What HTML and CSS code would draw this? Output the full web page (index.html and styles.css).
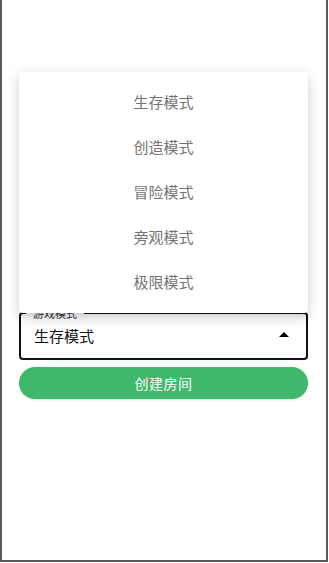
FILE: index.html
```html
<!DOCTYPE html>
<html lang="zh">
<head>
<meta charset="utf-8">
<link rel="stylesheet" href="styles.css">
</head>
<body>
<div class="frame">
  <form class="form">
    <div class="field">
      <span class="label">游戏模式</span>
      <span class="value">生存模式</span>
      <svg class="arrow" viewBox="0 0 24 24" width="24" height="24"><path d="M7 14l5-5 5 5z" fill="#000"/></svg>
    </div>
    <button type="button" class="btn">创建房间</button>
  </form>
  <ul class="menu">
    <li>生存模式</li>
    <li>创造模式</li>
    <li>冒险模式</li>
    <li>旁观模式</li>
    <li>极限模式</li>
  </ul>
</div>
</body>
</html>
```
FILE: styles.css
```css
* { box-sizing: border-box; }
html, body { margin: 0; padding: 0; background: #fff; }
body { font-family: "Noto Sans CJK SC", "Noto Sans", sans-serif; width: 329px; height: 563px; overflow: hidden; }
.frame {
  position: relative;
  width: 328px;
  height: 562px;
  border-left: 2px solid #5a5a5a;
  border-right: 2px solid #5a5a5a;
  border-bottom: 2px solid #5a5a5a;
  padding: 312px 18px 0 17px;
}
.form { display: flex; flex-direction: column; gap: 7px; }
.field {
  position: relative;
  height: 48px;
  border: 2px solid #111;
  border-radius: 4px;
  display: flex;
  align-items: center;
  padding: 0 13px;
}
.label {
  position: absolute;
  left: 5px;
  top: -9px;
  padding: 0 7px;
  background: #fff;
  font-size: 11px;
  line-height: 16px;
  color: #333;
}
.value { flex: 1; font-size: 15px; color: #111; margin-top: -2px; }
.arrow { margin-right: -3px; margin-top: -2px; }
.btn {
  height: 32px;
  border: none;
  border-radius: 16px;
  background: #3eb96a;
  color: #fff;
  font-family: inherit;
  font-size: 14px;
  letter-spacing: 0.5px;
  box-shadow: 0 1px 2px rgba(0,0,0,0.12);
}
.menu {
  position: absolute;
  left: 17px;
  top: 72px;
  width: 289px;
  margin: 0;
  padding: 7px 0 9px;
  list-style: none;
  background: #fff;
  border-radius: 4px;
  box-shadow: 0 4px 5px -3px rgba(0,0,0,0.12), 0 6px 10px 1px rgba(0,0,0,0.08), 0 2px 14px 2px rgba(0,0,0,0.08);
}
.menu li {
  height: 45px;
  display: flex;
  align-items: center;
  justify-content: center;
  font-size: 15px;
  color: #747474;
}
```
